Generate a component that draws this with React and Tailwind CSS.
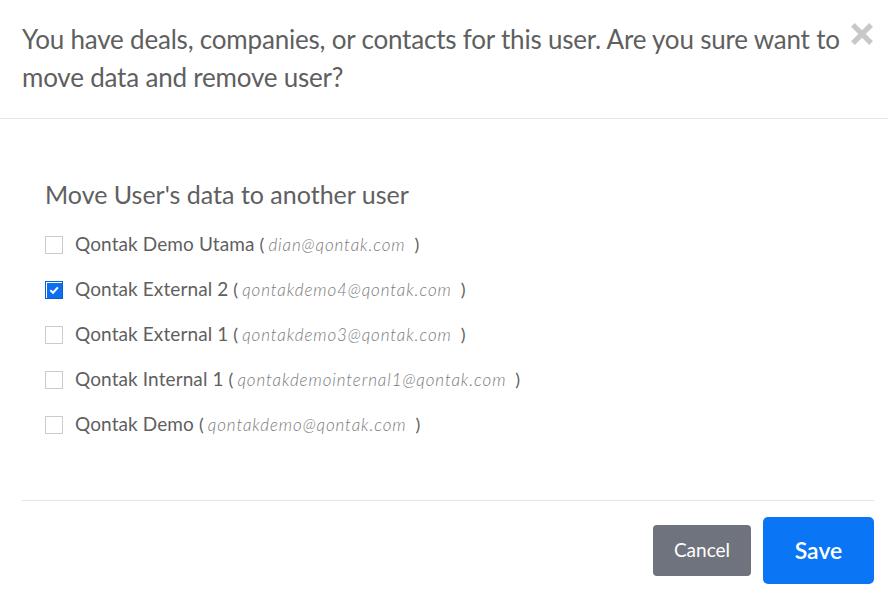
const users = [
  { name: "Qontak Demo Utama", email: "dian@qontak.com", checked: false },
  { name: "Qontak External 2", email: "qontakdemo4@qontak.com", checked: true },
  { name: "Qontak External 1", email: "qontakdemo3@qontak.com", checked: false },
  { name: "Qontak Internal 1", email: "qontakdemointernal1@qontak.com", checked: false },
  { name: "Qontak Demo", email: "qontakdemo@qontak.com", checked: false },
];

const Check = ({ checked }) =>
  checked ? (
    <span className="shrink-0 w-[18px] h-[18px] bg-[#0b6ff0] border border-[#0a5ed0] flex items-center justify-center shadow-[inset_1px_1px_0_#fff]">
      <svg viewBox="0 0 12 12" className="w-[12px] h-[12px]">
        <path d="M2.3 6.1 L5 8.7 L9.9 3.3" fill="none" stroke="#fff" strokeWidth="2" />
      </svg>
    </span>
  ) : (
    <span className="shrink-0 w-[18px] h-[18px] bg-white border border-[#cbcbcb]" />
  );

export default function App() {
  return (
    <div className="w-[888px] h-[604px] bg-white font-['Lato',sans-serif] text-[#5f5f5f] flex flex-col">
      {/* header */}
      <div className="relative border-b border-[#e6e6e6] h-[119px] pl-[22px] pt-[20px]">
        <p className="w-[820px] text-[26px] leading-[38px] tracking-[-0.2px]">
          You have deals, companies, or contacts for this user. Are you sure want to move data and remove user?
        </p>
        <button className="absolute right-[14px] top-[22px] text-[#c8c8c8]">
          <svg viewBox="0 0 20 20" className="w-[24px] h-[24px]">
            <path d="M4 4 L16 16 M16 4 L4 16" stroke="currentColor" strokeWidth="4.4" strokeLinecap="square" />
          </svg>
        </button>
      </div>

      {/* body */}
      <div className="px-[45px] pt-[58px] flex-1">
        <h3 className="text-[25px] leading-[34px] text-[#606060] mb-[11px]">Move User's data to another user</h3>
        <ul className="flex flex-col">
          {users.map((u) => (
            <li key={u.email} className="h-[45px] flex items-center gap-[12px]">
              <Check checked={u.checked} />
              <span className="text-[19px] tracking-[0.1px]">
                {u.name} <span className="text-[18px]">(</span>
                <span className="italic font-light text-[17px] tracking-[0.9px] text-[#7a7a7a] pl-[4px] pr-[4px]">{u.email}</span>{" "}
                <span className="text-[18px]">)</span>
              </span>
            </li>
          ))}
        </ul>
      </div>

      {/* footer */}
      <div className="ml-[22px] mr-[14px] mb-[20px] border-t border-[#e6e6e6] pt-[16px] flex justify-end items-center gap-[12px]">
        <button className="w-[98px] h-[51px] rounded-[4px] bg-[#6f737d] text-white text-[19px]">Cancel</button>
        <button className="w-[111px] h-[67px] rounded-[5px] bg-[#0a76f5] text-white text-[23px] font-semibold">Save</button>
      </div>
    </div>
  );
}
